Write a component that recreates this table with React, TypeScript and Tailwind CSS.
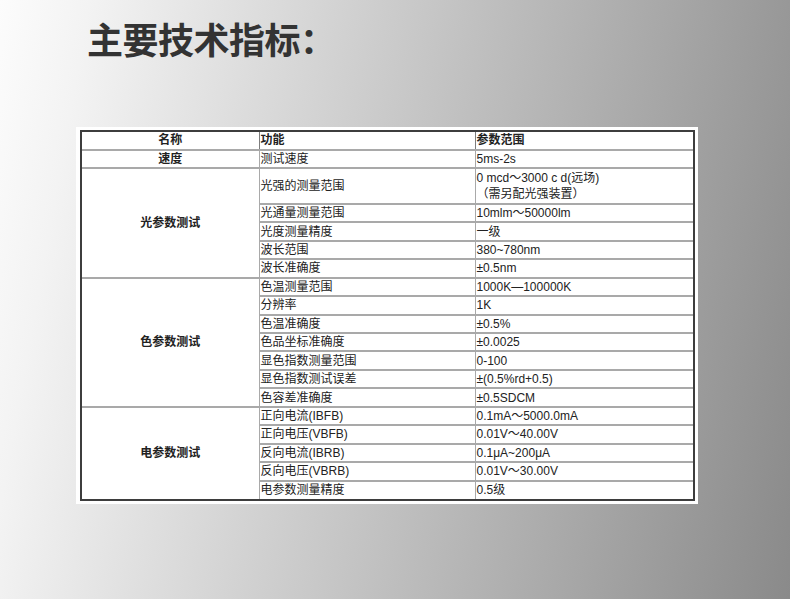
import type { ReactNode } from "react";

type SpecRow = { label: string; value: ReactNode; tall?: boolean };
type SpecGroup = { title: string; rows: SpecRow[] };

const GROUPS: SpecGroup[] = [
  { title: "速度", rows: [{ label: "测试速度", value: "5ms-2s" }] },
  {
    title: "光参数测试",
    rows: [
      {
        label: "光强的测量范围",
        value: (
          <>
            0 mcd～3000 c d(远场)
            <br />
            （需另配光强装置）
          </>
        ),
        tall: true,
      },
      { label: "光通量测量范围", value: "10mlm～50000lm" },
      { label: "光度测量精度", value: "一级" },
      { label: "波长范围", value: "380~780nm" },
      { label: "波长准确度", value: "±0.5nm" },
    ],
  },
  {
    title: "色参数测试",
    rows: [
      { label: "色温测量范围", value: "1000K—100000K" },
      { label: "分辨率", value: "1K" },
      { label: "色温准确度", value: "±0.5%" },
      { label: "色品坐标准确度", value: "±0.0025" },
      { label: "显色指数测量范围", value: "0-100" },
      { label: "显色指数测试误差", value: "±(0.5%rd+0.5)" },
      { label: "色容差准确度", value: "±0.5SDCM" },
    ],
  },
  {
    title: "电参数测试",
    rows: [
      { label: "正向电流(IBFB)", value: "0.1mA～5000.0mA" },
      { label: "正向电压(VBFB)", value: "0.01V～40.00V" },
      { label: "反向电流(IBRB)", value: "0.1μA~200μA" },
      { label: "反向电压(VBRB)", value: "0.01V～30.00V" },
      { label: "电参数测量精度", value: "0.5级" },
    ],
  },
];

const cellLine = "border-t-2 border-[#a9a9a9]";
const colLine = "border-l border-[#7d7d7d]";

export default function App() {
  return (
    <div className="w-full h-[599px] overflow-hidden pt-[20px] bg-[linear-gradient(100deg,#fcfcfc_0%,#f3f3f3_10%,#8a8a8a_100%)]">
      {/* Heading */}
      <h1 className="ml-[87px] text-[36px] leading-none font-bold tracking-[-0.5px] text-[#333333] font-['Noto_Sans_CJK_SC',sans-serif]">
        主要技术指标：
      </h1>

      {/* Spec table */}
      <div className="ml-[76px] mt-[71px] w-[622px] bg-white pt-[3px] pl-[4px] pr-[3px] pb-[3px]">
        <div className="border-2 border-[#3d3d3d]">
          <table className="w-full border-collapse text-[12px] leading-[14px] text-[#222222] font-['Liberation_Sans','Noto_Sans_CJK_SC',sans-serif]">
            <colgroup>
              <col className="w-[177px]" />
              <col className="w-[216px]" />
              <col />
            </colgroup>
            <tbody>
              <tr className="h-[17.5px]">
                <td className="text-center font-bold p-0">名称</td>
                <td className={`${colLine} font-bold pl-px py-0`}>功能</td>
                <td className={`${colLine} font-bold pl-px py-0`}>参数范围</td>
              </tr>
              {GROUPS.map((group) =>
                group.rows.map((row, i) => (
                  <tr
                    key={`${group.title}-${row.label}`}
                    className={row.tall ? "h-[36px]" : "h-[18.45px]"}
                  >
                    {i === 0 && (
                      <td
                        rowSpan={group.rows.length}
                        className={`${cellLine} text-center font-bold p-0 align-middle`}
                      >
                        {group.title}
                      </td>
                    )}
                    <td className={`${cellLine} ${colLine} pl-px py-0 whitespace-nowrap`}>
                      {row.label}
                    </td>
                    <td
                      className={`${cellLine} ${colLine} pl-px py-0 whitespace-nowrap ${
                        row.tall ? "leading-[16px]" : ""
                      }`}
                    >
                      {row.value}
                    </td>
                  </tr>
                )),
              )}
            </tbody>
          </table>
        </div>
      </div>
    </div>
  );
}
